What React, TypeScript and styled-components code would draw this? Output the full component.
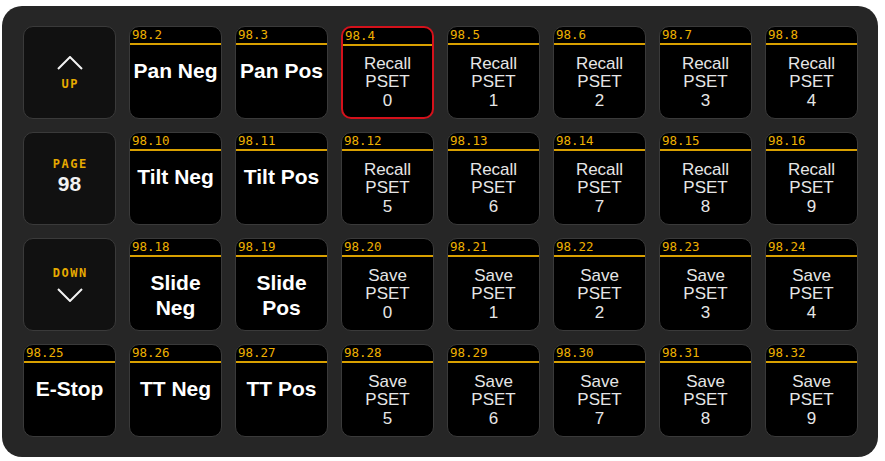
import React from 'react';
import styled, { createGlobalStyle } from 'styled-components';

type Key =
  | { kind: 'nav'; dir: 'up' | 'down' }
  | { kind: 'page'; page: number }
  | { kind: 'label'; id: string; text: string; big?: boolean; active?: boolean };

const bigKeys: Record<number, string> = {
  2: 'Pan Neg',
  3: 'Pan Pos',
  10: 'Tilt Neg',
  11: 'Tilt Pos',
  18: 'Slide\nNeg',
  19: 'Slide\nPos',
  25: 'E-Stop',
  26: 'TT Neg',
  27: 'TT Pos',
};

const buildKeys = (): Key[] => {
  const keys: Key[] = [];
  for (let n = 1; n <= 32; n++) {
    if (n === 1) keys.push({ kind: 'nav', dir: 'up' });
    else if (n === 9) keys.push({ kind: 'page', page: 98 });
    else if (n === 17) keys.push({ kind: 'nav', dir: 'down' });
    else if (bigKeys[n]) keys.push({ kind: 'label', id: `98.${n}`, text: bigKeys[n], big: true });
    else {
      // 4..8, 12..16 recall; 20..24, 28..32 save
      const col = (n - 1) % 8;
      const row = Math.floor((n - 1) / 8);
      const slot = col - 3 + (row % 2) * 5;
      const verb = row < 2 ? 'Recall' : 'Save';
      keys.push({
        kind: 'label',
        id: `98.${n}`,
        text: `${verb}\nPSET\n${slot}`,
        active: n === 4,
      });
    }
  }
  return keys;
};

const Chevron = ({ dir }: { dir: 'up' | 'down' }) => (
  <svg width="26" height="14" viewBox="0 0 26 14">
    <polyline
      points={dir === 'up' ? '1,13 13,1 25,13' : '1,1 13,13 25,1'}
      fill="none"
      stroke="#f2f2f2"
      strokeWidth="2"
    />
  </svg>
);

const App = () => {
  const keys = buildKeys();
  return (
    <>
      <GlobalStyle />
      <Panel>
        {keys.map((key, i) => {
          if (key.kind === 'nav') {
            return (
              <NavKey key={i}>
                {key.dir === 'up' ? (
                  <>
                    <Chevron dir="up" />
                    <NavText $gap={8}>UP</NavText>
                  </>
                ) : (
                  <>
                    <NavText $gap={0}>DOWN</NavText>
                    <ChevronBox>
                      <Chevron dir="down" />
                    </ChevronBox>
                  </>
                )}
              </NavKey>
            );
          }
          if (key.kind === 'page') {
            return (
              <NavKey key={i} $lift>
                <NavText $gap={0}>PAGE</NavText>
                <PageNum>{key.page}</PageNum>
              </NavKey>
            );
          }
          return (
            <LabelKey key={i} $active={key.active}>
              <Header>{key.id}</Header>
              <Body>
                <Text $big={key.big}>{key.text}</Text>
              </Body>
            </LabelKey>
          );
        })}
      </Panel>
    </>
  );
};

export default App;

const GlobalStyle = createGlobalStyle`
  html, body {
    margin: 0;
    padding: 0;
    background: #ffffff;
  }
  body {
    font-family: 'Liberation Sans', Arial, sans-serif;
  }
`;

const Panel = styled.div`
  box-sizing: border-box;
  width: 876px;
  height: 451px;
  margin: 6px 0 0 2px;
  padding: 20px 20px 21px 21px;
  background: #262626;
  border-radius: 20px;
  display: grid;
  grid-template-columns: repeat(8, 93px);
  grid-auto-rows: 93px;
  gap: 13px;
`;

const KeyBase = styled.div`
  box-sizing: border-box;
  border: 1px solid #3a3a3a;
  border-radius: 10px;
  overflow: hidden;
`;

const NavKey = styled(KeyBase)<{ $lift?: boolean }>`
  background: #111111;
  display: flex;
  flex-direction: column;
  align-items: center;
  justify-content: center;
  padding-bottom: ${({ $lift }) => ($lift ? '6px' : '0')};
`;

const NavText = styled.div<{ $gap: number }>`
  margin-top: ${({ $gap }) => $gap}px;
  color: #e6aa00;
  font-family: 'DejaVu Sans Mono', 'Liberation Mono', monospace;
  font-weight: bold;
  font-size: 12px;
  letter-spacing: 1.5px;
  padding-left: 1.5px;
  line-height: 12px;
`;

const ChevronBox = styled.div`
  margin-top: 9px;
  display: flex;
`;

const PageNum = styled.div`
  margin-top: 4px;
  color: #f2f2f2;
  font-weight: bold;
  font-size: 21px;
  line-height: 20px;
`;

const LabelKey = styled(KeyBase)<{ $active?: boolean }>`
  background: #000000;
  display: flex;
  flex-direction: column;
  border: ${({ $active }) => ($active ? '2px solid #d4111b' : '1px solid #3a3a3a')};
`;

const Header = styled.div`
  height: 16px;
  flex: none;
  border-bottom: 2px solid #d9a000;
  padding-left: 2px;
  color: #eeb000;
  font-family: 'DejaVu Sans Mono', 'Liberation Mono', monospace;
  font-size: 12.5px;
  line-height: 16px;
`;

const Body = styled.div`
  flex: 1;
  display: flex;
  align-items: center;
  justify-content: center;
  padding-top: 2px;
`;

const Text = styled.div<{ $big?: boolean }>`
  white-space: pre-line;
  text-align: center;
  color: ${({ $big }) => ($big ? '#ffffff' : '#e6e6e6')};
  font-weight: ${({ $big }) => ($big ? 'bold' : 'normal')};
  font-size: ${({ $big }) => ($big ? '21px' : '17px')};
  line-height: ${({ $big }) => ($big ? '25px' : '18.5px')};
  min-height: ${({ $big }) => ($big ? '50px' : '0')};
`;
